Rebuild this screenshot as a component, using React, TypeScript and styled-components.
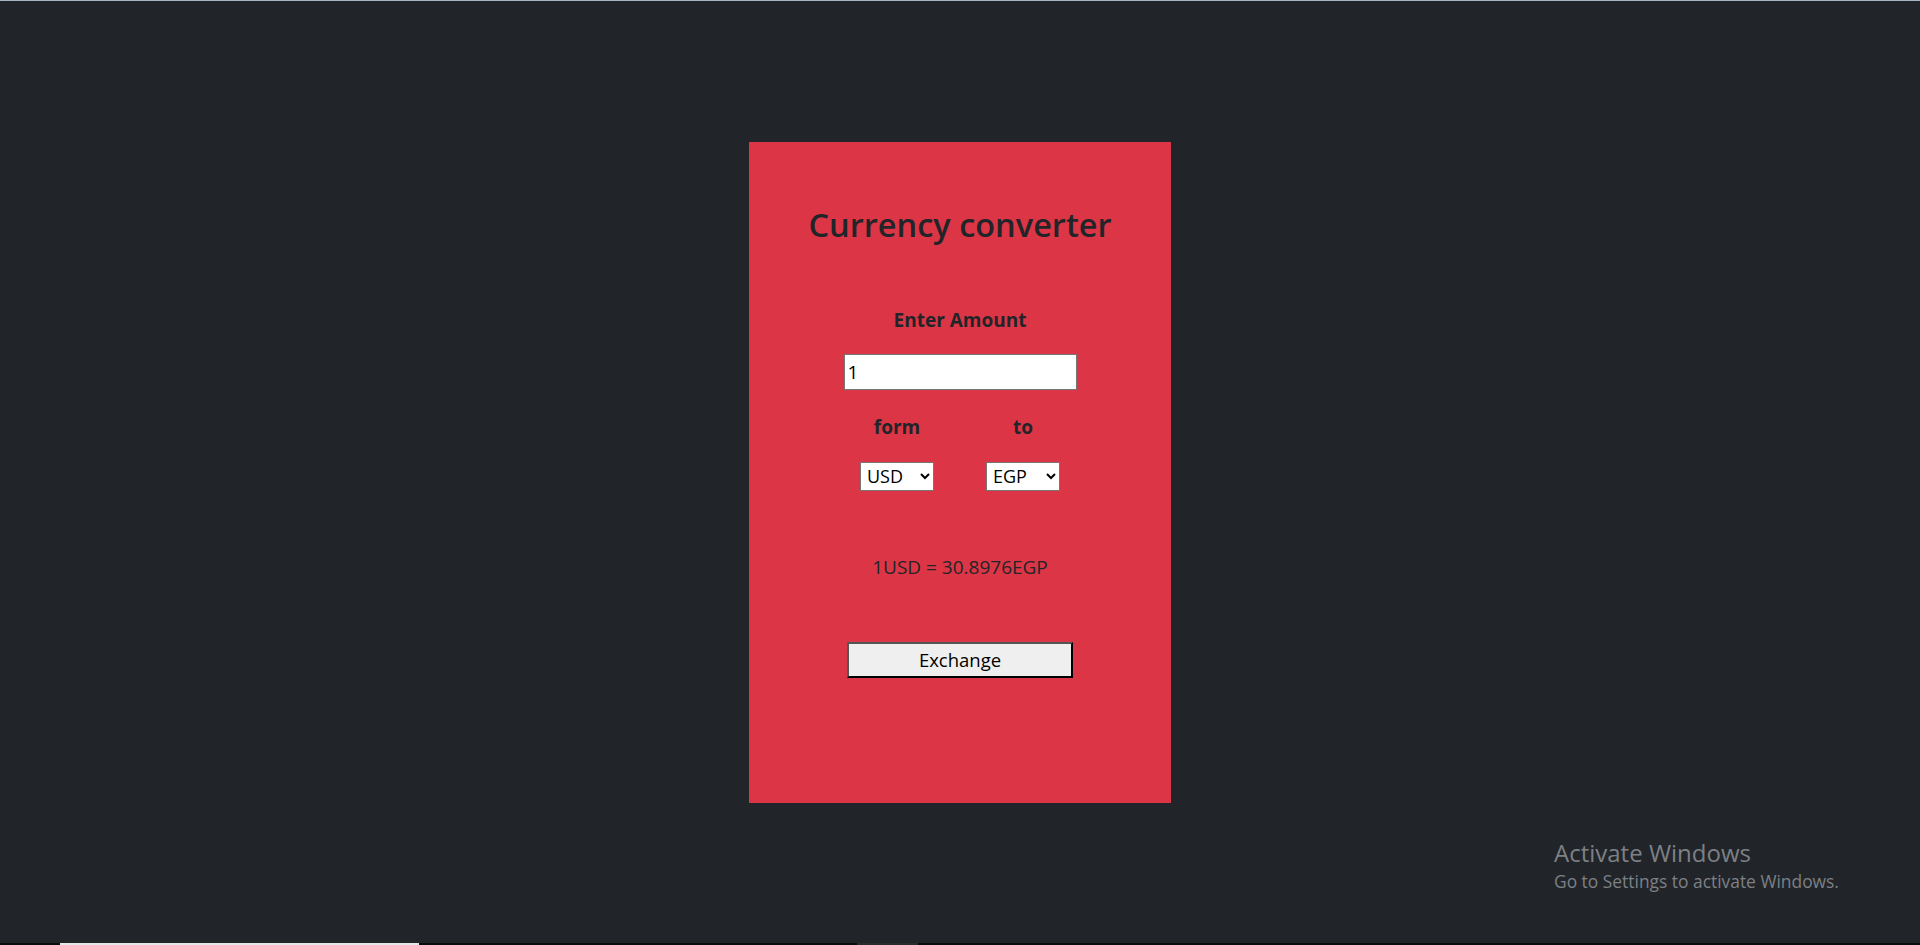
import React, { useState } from "react";
import styled, { createGlobalStyle } from "styled-components";

const GlobalStyle = createGlobalStyle`
  html, body {
    margin: 0;
    padding: 0;
    height: 100%;
  }
  body {
    background: #212529;
    font-family: "Open Sans", "Noto Sans", sans-serif;
    color: #212529;
    overflow: hidden;
  }
  #root { height: 100%; }
`;

const Page = styled.div`
  position: relative;
  height: 945px;
  display: flex;
  flex-direction: column;
  border-top: 1px solid #a9b3c6;
  box-sizing: border-box;
`;

const Main = styled.main`
  flex: 1;
  display: flex;
  align-items: center;
  justify-content: center;
`;

const Card = styled.section`
  width: 422px;
  height: 661px;
  box-sizing: border-box;
  background: #dc3545;
  padding-top: 60px;
  display: flex;
  flex-direction: column;
  align-items: center;
`;

const Title = styled.h2`
  margin: 0;
  font-size: 32.5px;
  line-height: 45px;
  font-weight: 600;
  color: #212529;
`;

const Label = styled.label<{ $mt: number }>`
  display: block;
  margin-top: ${(p) => p.$mt}px;
  font-size: 19px;
  line-height: 26px;
  font-weight: 700;
  color: #212529;
  text-align: center;
`;

const AmountInput = styled.input`
  margin-top: 21px;
  width: 233px;
  height: 36px;
  box-sizing: border-box;
  border: 1px solid #767676;
  background: #fff;
  padding: 0 3px;
  font-family: "Open Sans", sans-serif;
  font-size: 19px;
  color: #000;
  outline: none;
`;

const Pair = styled.div<{ $mt: number }>`
  margin-top: ${(p) => p.$mt}px;
  display: grid;
  grid-template-columns: 126px 126px;
  justify-items: center;
`;

const Select = styled.select`
  width: 74px;
  height: 29px;
  box-sizing: border-box;
  border: 1px solid #767676;
  border-radius: 0;
  background: #fff;
  font-family: "Open Sans", sans-serif;
  font-size: 18px;
  color: #000;
  padding: 0 2px;
  outline: none;
`;

const Result = styled.p`
  margin: 63px 0 0;
  font-size: 19px;
  line-height: 27px;
  font-weight: 400;
  color: #212529;
`;

const Button = styled.button`
  margin-top: 61px;
  width: 226px;
  height: 36px;
  box-sizing: border-box;
  background: #efefef;
  border: 2px solid;
  border-color: #555 #000 #000 #555;
  font-family: "Open Sans", sans-serif;
  font-size: 18.5px;
  color: #000;
  padding: 0;
  cursor: pointer;
`;

const Taskbar = styled.footer`
  height: 2px;
  background: #0c0c0c;
  display: flex;
  align-items: stretch;
`;

const TaskItem = styled.div<{ $left: number; $width: number; $color: string }>`
  margin-left: ${(p) => p.$left}px;
  width: ${(p) => p.$width}px;
  background: ${(p) => p.$color};
`;

const Watermark = styled.div`
  position: absolute;
  left: 1554px;
  top: 836px;
  color: #7d8085;
  font-family: "Open Sans", sans-serif;
  pointer-events: none;
`;

const WatermarkTitle = styled.div`
  font-size: 24px;
  line-height: 32px;
`;

const WatermarkText = styled.div`
  font-size: 17.4px;
  line-height: 24px;
`;

export default function App() {
  const [amount, setAmount] = useState("1");
  const [from, setFrom] = useState("USD");
  const [to, setTo] = useState("EGP");
  return (
    <>
      <GlobalStyle />
      <Page>
        <Main>
          <Card>
            <Title>Currency converter</Title>
            <Label $mt={60}>Enter Amount</Label>
            <AmountInput value={amount} onChange={(e) => setAmount(e.target.value)} />
            <Pair $mt={24}>
              <Label $mt={0}>form</Label>
              <Label $mt={0}>to</Label>
            </Pair>
            <Pair $mt={22}>
              <Select value={from} onChange={(e) => setFrom(e.target.value)}>
                <option>USD</option>
                <option>EUR</option>
                <option>EGP</option>
              </Select>
              <Select value={to} onChange={(e) => setTo(e.target.value)}>
                <option>EGP</option>
                <option>USD</option>
                <option>EUR</option>
              </Select>
            </Pair>
            <Result>1USD = 30.8976EGP</Result>
            <Button>Exchange</Button>
          </Card>
        </Main>
        <Taskbar>
          <TaskItem $left={60} $width={359} $color="#e6e6e6" />
          <TaskItem $left={438} $width={61} $color="#2b2b2b" />
        </Taskbar>
        <Watermark>
          <WatermarkTitle>Activate Windows</WatermarkTitle>
          <WatermarkText>Go to Settings to activate Windows.</WatermarkText>
        </Watermark>
      </Page>
    </>
  );
}
